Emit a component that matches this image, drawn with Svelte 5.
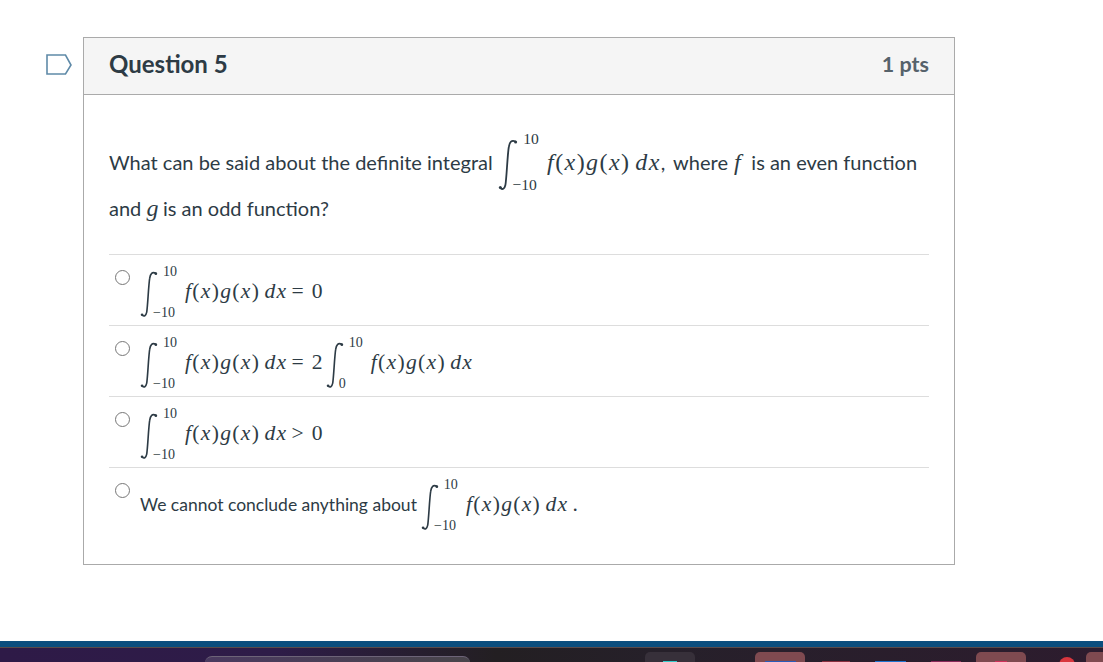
<script lang="ts">
  const answers = [
    { tail: '= 0' },
    { tail: '= 2', second: true },
    { tail: '> 0' },
    { lead: 'We cannot conclude anything about', tail: '.' }
  ];
</script>

{#snippet integral(lo: string, hi: string)}
  <span class="int">
    <svg class="int-sign" viewBox="0 0 20 52" aria-hidden="true">
      <path d="M2.500 49C4.500 51 6.500 50 7.400 46C8.500 41 9.500 15 10.800 8C11.600 3 13.500 .5 17.500 2.500" />
      <circle cx="2.300" cy="48.600" r="1.500" />
      <circle cx="17.600" cy="3" r="1.500" />
    </svg>
    <span class="limits">
      <span class="hi">{hi}</span>
      <span class="lo">{lo}</span>
    </span>
  </span>
{/snippet}

{#snippet fg()}
  <span class="math"><i>f</i>(<i>x</i>)<i>g</i>(<i>x</i>)<span class="thin"></span><i>dx</i></span>
{/snippet}

<div class="page">
  <main class="main">
    <div class="flag" aria-hidden="true">
      <svg width="28" height="22" viewBox="0 0 28 22">
        <path d="M1 1H19.500L25 11L19.500 20H1Z" fill="#fff" stroke="#5f8aa8" stroke-width="1.600" />
      </svg>
    </div>
    <section class="card">
      <header class="head">
        <h2>Question 5</h2>
        <span class="pts">1 pts</span>
      </header>
      <div class="body">
        <p class="question">
          What can be said about the definite integral
          {@render integral('−10', '10')}
          {@render fg()}<span class="comma">,</span> where <i class="math var-f">f</i> is an even function and <i class="math var-g">g</i> is an odd function?
        </p>
        <ul class="answers">
          {#each answers as a}
            <li class="answer">
              <span class="radio"></span>
              <span class="label">
                {#if a.lead}<span class="lead">{a.lead}</span>{/if}
                {@render integral('−10', '10')}
                {@render fg()}
                <span class="math tail">{a.tail}</span>
                {#if a.second}
                  {@render integral('0', '10')}
                  {@render fg()}
                {/if}
              </span>
            </li>
          {/each}
        </ul>
      </div>
    </section>
  </main>

  <footer class="taskbar">
    <div class="strip"></div>
    <div class="tray">
      <div class="search"></div>
      <div class="tile dim"><span class="tip teal"></span></div>
      <div class="tile rose first"><span class="tip blue"></span></div>
      <span class="tip red"></span>
      <span class="tip blue wide"></span>
      <span class="tip plum"></span>
      <div class="tile rose second"><span class="tip pink"></span></div>
      <span class="badge"></span>
      <div class="tile rose last"></div>
    </div>
  </footer>
</div>

<style>
  :global(body) { margin: 0; background: #fff; }

  .page {
    width: 1103px;
    height: 662px;
    display: flex;
    flex-direction: column;
    overflow: hidden;
    font-family: Lato, "Liberation Sans", sans-serif;
    color: #2d3b45;
  }

  .main {
    flex: 1;
    display: flex;
    align-items: flex-start;
    padding: 37px 0 0 46px;
  }

  .flag { width: 37px; padding-top: 17px; line-height: 0; }

  .card {
    width: 870px;
    height: 526px;
    border: 1px solid #aaa;
    flex-shrink: 0;
  }

  .head {
    height: 51px;
    display: flex;
    align-items: center;
    justify-content: space-between;
    padding: 0 25px 5px;
    background: #f5f5f5;
    border-bottom: 1px solid #aaa;
  }

  h2 { margin: 0; font-size: 24px; font-weight: 700; color: #2d3b45; }
  .pts { font-size: 21.500px; font-weight: 700; color: #56626b; }

  .body { padding: 45px 25px 0; }

  .question {
    margin: 0 0 23px;
    font-size: 20px;
    line-height: 45px;
  }
  .question .int { margin: -.65em .15em -.35em 0; }
  .question .math { line-height: 1; }
  .comma { margin-right: 3px; }
  .question .var-f { margin: 0 4px 0 1px; }
  .question .var-g { margin: 0 -2px 0 0; }

  .answers { list-style: none; margin: 0; padding: 0; }

  .answer {
    height: 70px;
    border-top: 1px solid #ddd;
    display: flex;
  }

  .radio {
    width: 13px;
    height: 13px;
    margin: 15px 0 0 6px;
    border: 1.500px solid #777;
    border-radius: 50%;
    flex-shrink: 0;
  }

  .label {
    display: flex;
    align-items: center;
    margin-left: 10px;
    padding-top: 3px;
    font-size: 18px;
    height: 67px;
    white-space: pre;
  }

  .lead { margin-right: 4px; font-size: 17.500px; }
  .tail { margin-left: 4px; margin-right: 2px; }

  .math {
    font-family: "Liberation Serif", "Times New Roman", serif;
    font-size: 1.200em;
    letter-spacing: .06em;
    color: #2d3b45;
  }
  .thin { display: inline-block; width: .2em; }

  .int {
    display: inline-flex;
    align-items: flex-start;
    vertical-align: middle;
    line-height: 1;
    height: 3.110em;
    margin-right: .45em;
  }

  .int-sign {
    width: 1em;
    height: 2.600em;
    margin-top: .39em;
    flex-shrink: 0;
    overflow: visible;
    fill: #2d3b45;
  }
  .int-sign path { fill: none; stroke: #2d3b45; stroke-width: 1.800; }

  .limits {
    display: flex;
    flex-direction: column;
    justify-content: space-between;
    height: 100%;
    margin-left: -.35em;
    font-family: "Liberation Serif", "Times New Roman", serif;
    font-size: .78em;
  }
  .hi { margin-left: .7em; }

  .taskbar { height: 21px; display: flex; flex-direction: column; }
  .strip { height: 6px; background: #0b4e7e; }
  .tray {
    flex: 1;
    display: flex;
    align-items: flex-start;
    padding-left: 205px;
    background: linear-gradient(90deg, #2e1a47 0%, #2e1c48 25%, #231f22 45%, #26202a 60%, #2d1c2e 100%);
    border-top: 1px solid #5a4a4a;
    overflow: hidden;
  }

  .search {
    width: 265px;
    height: 6px;
    margin-top: 8px;
    border-radius: 12px 12px 0 0;
    background: linear-gradient(90deg, #4a3a60, #49454b);
    border-top: 1px solid #6d6478;
    flex-shrink: 0;
  }

  .tile {
    width: 50px;
    height: 10px;
    margin-top: 4px;
    border-radius: 5px 5px 0 0;
    display: flex;
    justify-content: center;
    align-items: flex-end;
    flex-shrink: 0;
  }
  .dim { margin-left: 175px; background: #37303a; }
  .rose { background: #7f4a50; }
  .first { margin-left: 60px; }
  .second { margin-left: 15px; }
  .last { margin-left: 11px; }

  .tip { display: block; height: 1px; flex-shrink: 0; }
  .teal { width: 14px; background: #3cc; }
  .blue { width: 31px; background: #2a5bb8; }
  .red { width: 28px; margin: 13px 0 0 17px; background: #8a3040; }
  .wide { margin: 13px 0 0 25px; background: #1e74d0; }
  .plum { width: 30px; margin: 13px 0 0 25px; background: #8a2a5a; }
  .pink { width: 12px; background: #d0305a; }

  .badge {
    width: 16px;
    height: 16px;
    margin: 9px 0 0 33px;
    border-radius: 50%;
    background: #d9363e;
    flex-shrink: 0;
  }
</style>
